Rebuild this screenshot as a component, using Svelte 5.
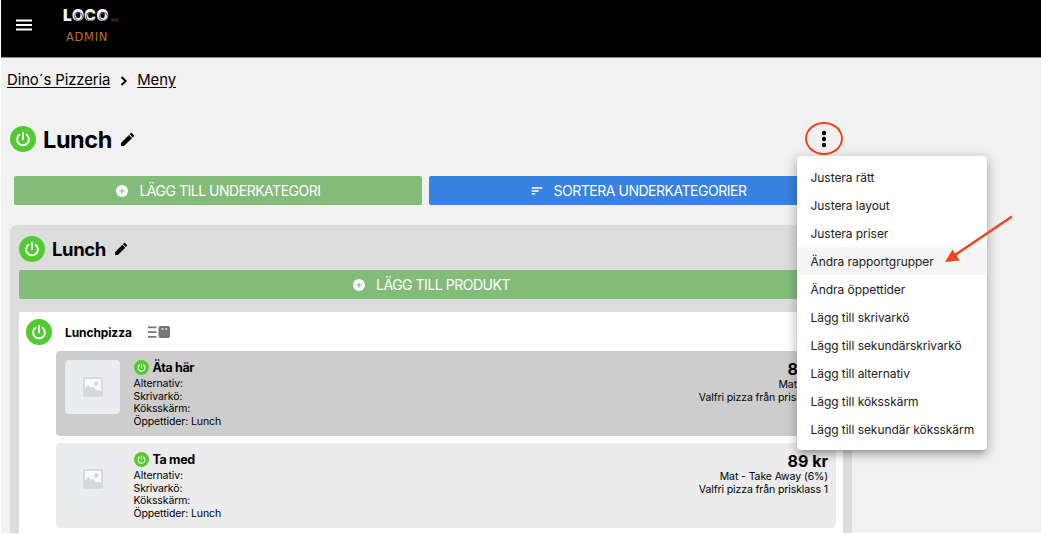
<script lang="ts">
  type Product = {
    name: string;
    dark: boolean;
    price: string;
    group: string;
    description: string;
  };

  const products: Product[] = [
    { name: 'Äta här', dark: true, price: '89 kr', group: 'Mat (12%)', description: 'Valfri pizza från prisklass 1' },
    { name: 'Ta med', dark: false, price: '89 kr', group: 'Mat - Take Away (6%)', description: 'Valfri pizza från prisklass 1' },
  ];

  const menuItems = [
    'Justera rätt',
    'Justera layout',
    'Justera priser',
    'Ändra rapportgrupper',
    'Ändra öppettider',
    'Lägg till skrivarkö',
    'Lägg till sekundärskrivarkö',
    'Lägg till alternativ',
    'Lägg till köksskärm',
    'Lägg till sekundär köksskärm',
  ];

  let active = $state(3);
</script>

{#snippet power()}
  <svg class="power" viewBox="0 0 26 26" fill="none" stroke="#fff" stroke-width="1.9" stroke-linecap="round">
    <circle cx="13" cy="13" r="13" fill="#53cb30" stroke="none" />
    <path d="M13 6.800v6.400M9.400 8.700a5.900 5.900 0 1 0 7.200 0" />
  </svg>
{/snippet}

{#snippet pencil()}
  <svg class="pencil" viewBox="3 3 18 18">
    <path d="M3 16.700V21h4.300L18.300 10l-4.300-4.300L3 16.700zM20.710 7.600a1.400 1.400 0 0 0 0-2l-2.340-2.340a1.400 1.400 0 0 0-2 0l-1.400 1.500 4.300 4.300 1.440-1.460z" />
  </svg>
{/snippet}

{#snippet plus()}
  <svg class="btn-icon" viewBox="0 0 24 24">
    <circle cx="12" cy="12" r="10.300" fill="#fff" />
    <path d="M12 7.500v9M7.500 12h9" stroke="#83bb79" stroke-width="1.8" />
  </svg>
{/snippet}

<div class="page">
  <header class="topbar">
    <svg class="burger" viewBox="0 0 16 12" fill="#fff">
      <path d="M0 .4h16v2H0zM0 5h16v2H0zM0 9.600h16v2H0z" />
    </svg>
    <div class="brand">
      <div class="logo"><span class="l">L</span><span class="round">O</span><span class="round c">C</span><span class="round">O</span><small>app</small></div>
      <div class="admin">ADMIN</div>
    </div>
  </header>

  <nav class="crumbs">
    <a href="#pizzeria">Dino´s Pizzeria</a>
    <svg viewBox="0 0 8 10" fill="none" stroke="#000" stroke-width="1.9"><path d="M1.500 1l4.200 4-4.200 4" /></svg>
    <a href="#meny">Meny</a>
  </nav>

  <main>
    <div class="title">
      {@render power()}
      <h1>Lunch</h1>
      {@render pencil()}
      <button class="more" aria-label="Mer">
        <svg viewBox="0 0 6 18"><circle cx="3" cy="3" r="2.200" /><circle cx="3" cy="9" r="2.200" /><circle cx="3" cy="15" r="2.200" /></svg>
        <span class="ring"></span>
      </button>
    </div>

    <div class="actions">
      <button class="btn green">{@render plus()}<span>LÄGG TILL UNDERKATEGORI</span></button>
      <button class="btn blue">
        <svg class="btn-icon" viewBox="0 0 24 24" fill="#fff"><path d="M3 18h6v-2.400H3zM3 5.600V8h18V5.600zM3 13.200h12v-2.400H3z" /></svg>
        <span>SORTERA UNDERKATEGORIER</span>
      </button>
    </div>

    <section class="panel">
      <div class="subtitle">
        {@render power()}
        <h2>Lunch</h2>
        {@render pencil()}
      </div>
      <button class="btn green">{@render plus()}<span>LÄGG TILL PRODUKT</span></button>

      <div class="card">
        <div class="card-head">
          {@render power()}
          <h3>Lunchpizza</h3>
          <svg class="kinds" viewBox="0 0 22 12">
            <path d="M0 .5h8.500v1.700H0zM0 5.200h8.500v1.700H0zM0 10h8.500v1.700H0z" fill="#777" />
            <rect x="10.500" width="11.500" height="12" rx="2" fill="#777" />
            <path d="M13.400 2.300h2v1.500h-2zM17.200 2.300h2v1.500h-2z" fill="#eee" />
          </svg>
        </div>

        {#each products as p}
          <article class="product" class:dark={p.dark}>
            <div class="thumb">
              <svg viewBox="0 0 20 20">
                <rect width="20" height="20" rx="1" fill="#d6d8db" />
                <path d="M2 2h16v11.500l-5-.5-3-3.500-2 1.300L5 7.500l-3 4z" fill="#fbfbfc" />
                <circle cx="13.200" cy="6.600" r="2.300" fill="#d6d8db" />
              </svg>
            </div>
            <div class="info">
              <div class="name">{@render power()}<strong>{p.name}</strong></div>
              <div>Alternativ:</div>
              <div>Skrivarkö:</div>
              <div>Köksskärm:</div>
              <div>Öppettider: Lunch</div>
            </div>
            <div class="pricing">
              <strong>{p.price}</strong>
              <div>{p.group}</div>
              <div>{p.description}</div>
            </div>
          </article>
        {/each}
      </div>
    </section>
  </main>

  <ul class="menu">
    {#each menuItems as item, i}
      <li class:active={active === i}>{item}</li>
    {/each}
  </ul>

  <svg class="arrow" viewBox="0 0 70 50">
    <path d="M67 1.500L10 40" stroke="#f3451b" stroke-width="2.500" />
    <path d="M0 47L7.500 34.500 14.500 45.500z" fill="#f3451b" />
  </svg>
</div>

<style>
  :global(body) {
    background: #fff;
  }
  .page {
    position: relative;
    box-sizing: border-box;
    width: 1040px;
    height: 533px;
    margin-left: 1px;
    overflow: hidden;
    background: #f1f1f1;
    color: #000;
    font-family: Inter, "Liberation Sans", sans-serif;
  }
  h1, h2, h3, ul {
    margin: 0;
    padding: 0;
  }
  svg {
    display: block;
    flex-shrink: 0;
  }
  button {
    border: 0;
    padding: 0;
    background: none;
    font-family: inherit;
  }

  .topbar {
    display: flex;
    height: 57px;
    background: #000;
    border-bottom: 1px solid #8d8d8d;
  }
  .burger {
    width: 16px;
    height: 12px;
    margin: 19px 0 0 15px;
  }
  .brand {
    margin: 9px 0 0 31px;
  }
  .logo {
    display: flex;
    height: 14px;
    color: #f4f4f4;
    font-size: 15.5px;
    font-weight: 900;
    line-height: 14px;
  }
  .logo .l {
    width: 9px;
  }
  .logo .round {
    position: relative;
    width: 12.2px;
  }
  /* thin groove inside the round letters */
  .round::after {
    content: "";
    position: absolute;
    top: 3px;
    left: 2.300px;
    width: 7px;
    height: 7px;
    border: 0.500px solid #555;
    border-radius: 50%;
  }
  .logo .c::after {
    border-right-color: transparent;
  }
  .logo small {
    align-self: flex-end;
    margin-left: 2px;
    color: #8a5417;
    font: 4.500px/6px "DejaVu Sans", sans-serif;
    letter-spacing: -0.2px;
  }
  .admin {
    margin: 7px 0 0 3px;
    color: #b87318;
    font: 11.500px/14px "DejaVu Sans", sans-serif;
    letter-spacing: 0.700px;
  }

  .crumbs {
    display: flex;
    align-items: center;
    height: 20px;
    margin: 12px 0 0 6px;
    font-size: 14.900px;
    letter-spacing: -0.1px;
  }
  .crumbs a {
    color: #000;
    text-underline-offset: 2px;
  }
  .crumbs svg {
    width: 8px;
    height: 10px;
    margin: 1px 9px 0 10px;
  }

  main {
    width: 842px;
    padding: 36px 0 0 9px;
    box-sizing: content-box;
  }
  .power {
    width: 26px;
    height: 26px;
  }
  .title {
    display: flex;
    align-items: center;
    height: 26px;
  }
  h1 {
    margin-left: 7px;
    padding-top: 2px;
    font-size: 23.500px;
    line-height: 26px;
    letter-spacing: -0.400px;
  }
  .title .pencil {
    width: 13px;
    height: 13px;
    margin-left: 9px;
  }
  .more {
    position: relative;
    margin: 0 25px 0 auto;
  }
  .more svg {
    width: 6px;
    height: 18px;
  }
  .ring {
    position: absolute;
    inset: -8px -16px -7px;
    border: 2px solid #f3451b;
    border-radius: 50%;
  }

  .actions {
    display: grid;
    grid-template-columns: 408px 418px;
    gap: 7px;
    margin: 24px 0 0 4px;
  }
  .btn {
    display: flex;
    align-items: center;
    justify-content: center;
    gap: 10px;
    width: 100%;
    height: 29px;
    border-radius: 2px;
    color: #fff;
    font-size: 14px;
    letter-spacing: -0.480px;
  }
  .green {
    background: #83bb79;
  }
  .blue {
    background: #3882e1;
  }
  .btn-icon {
    width: 14px;
    height: 14px;
  }

  .panel {
    box-sizing: border-box;
    width: 842px;
    margin-top: 20px;
    padding: 11px 9px 0;
    border-radius: 7px 7px 0 0;
    background: #dcdcdc;
  }
  .subtitle {
    display: flex;
    align-items: center;
    height: 26px;
    margin-bottom: 8px;
  }
  h2 {
    margin-left: 7px;
    font-size: 18.500px;
    letter-spacing: -0.400px;
  }
  .subtitle .pencil {
    width: 12px;
    height: 12px;
    margin-left: 9px;
  }
  .card {
    height: 260px;
    margin-top: 13px;
    padding: 7px 7px 0;
    background: #fff;
  }
  .card-head {
    display: flex;
    align-items: center;
    height: 26px;
    margin-bottom: 6px;
  }
  h3 {
    margin-left: 13px;
    font-size: 12px;
    letter-spacing: -0.1px;
  }
  .kinds {
    width: 22px;
    height: 12px;
    margin-left: 16px;
  }

  .product {
    display: flex;
    box-sizing: border-box;
    height: 85px;
    margin: 0 0 7px 30px;
    padding: 8px 8px 0;
    border-radius: 4px;
    background: #ececec;
    font-size: 10.500px;
    line-height: 12.700px;
    letter-spacing: -0.1px;
  }
  .product.dark {
    background: #cdcdcd;
  }
  .thumb {
    display: flex;
    align-items: center;
    justify-content: center;
    width: 55px;
    height: 54px;
    margin: 1px 13.500px 0 1px;
    border-radius: 4px;
    background: #ebecf0;
  }
  .thumb svg {
    width: 20px;
    height: 20px;
  }
  .name {
    display: flex;
    align-items: center;
    gap: 4px;
    height: 17px;
    margin-bottom: 2px;
  }
  .name .power {
    width: 15px;
    height: 15px;
  }
  .name strong {
    padding-top: 1px;
    font-size: 12.500px;
    letter-spacing: -0.350px;
  }
  .pricing {
    margin-left: auto;
    text-align: right;
  }
  .pricing strong {
    display: block;
    padding-top: 1px;
    margin-bottom: 1px;
    font-size: 16px;
    line-height: 18px;
    letter-spacing: 0;
  }

  .menu {
    position: absolute;
    top: 156px;
    left: 796px;
    box-sizing: border-box;
    width: 190px;
    height: 294px;
    padding: 7px 0;
    border-radius: 4px;
    background: #fff;
    box-shadow: 0 5px 5px -3px rgba(0, 0, 0, 0.2), 0 5px 10px 1px rgba(0, 0, 0, 0.14), 0 2px 12px 2px rgba(0, 0, 0, 0.12);
    list-style: none;
  }
  .menu li {
    box-sizing: border-box;
    height: 28px;
    padding: 1px 0 0 13.500px;
    color: #212121;
    font-size: 12px;
    line-height: 28px;
    letter-spacing: -0.050px;
    white-space: nowrap;
  }
  .menu .active {
    background: #f5f5f5;
  }
  .arrow {
    position: absolute;
    top: 215px;
    left: 944px;
    width: 70px;
    height: 50px;
  }
</style>
